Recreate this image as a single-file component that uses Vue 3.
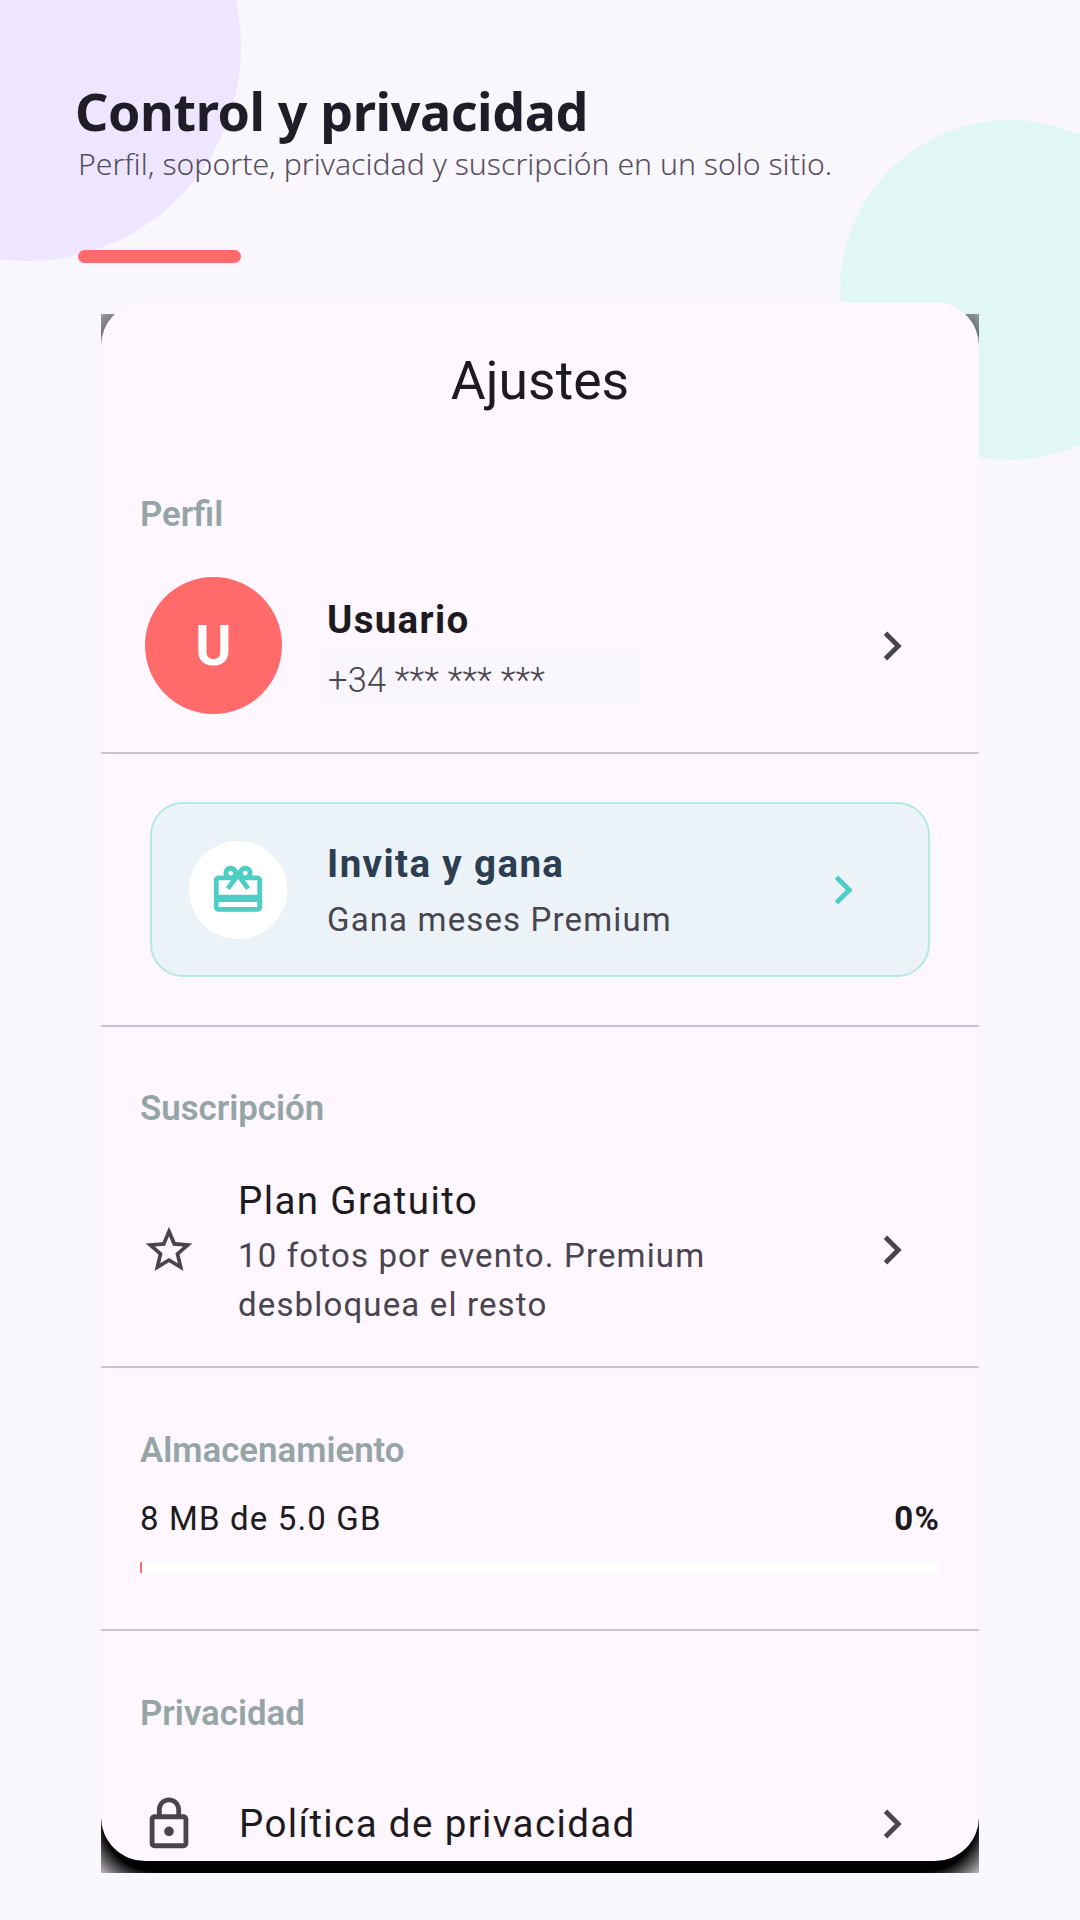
<template>
  <div class="page">
    <div class="blob blob-lilac"></div>
    <div class="blob blob-teal"></div>

    <header class="head">
      <h1 class="head-title">Control y privacidad</h1>
      <p class="head-sub">Perfil, soporte, privacidad y suscripción en un solo sitio.</p>
      <div class="head-bar"></div>
    </header>

    <div class="card-wrap">
      <div class="card-shadow"></div>
      <main class="card">
        <div class="app-title">Ajustes</div>

        <section class="sec sec-profile">
          <div class="label">Perfil</div>
          <div class="profile-row">
            <div class="avatar">U</div>
            <div class="profile-text">
              <div class="name">Usuario</div>
              <div class="phone">+34 *** *** ***</div>
            </div>
            <svg class="chev" viewBox="0 0 24 24"><path :d="icons.chevron" /></svg>
          </div>
        </section>

        <section class="sec sec-invite">
          <div class="invite">
            <div class="invite-icon">
              <svg viewBox="0 0 24 24"><path :d="icons.gift" /></svg>
            </div>
            <div class="invite-text">
              <div class="invite-title">Invita y gana</div>
              <div class="invite-sub">Gana meses Premium</div>
            </div>
            <svg class="chev chev-teal" viewBox="0 0 24 24"><path :d="icons.chevron" /></svg>
          </div>
        </section>

        <section class="sec sec-plan">
          <div class="label">Suscripción</div>
          <div class="plan-row">
            <svg class="lead lead-star" viewBox="0 0 24 24"><path :d="icons.star" /></svg>
            <div class="plan-text">
              <div class="item-title">Plan Gratuito</div>
              <div class="item-sub">10 fotos por evento. Premium<br />desbloquea el resto</div>
            </div>
            <svg class="chev" viewBox="0 0 24 24"><path :d="icons.chevron" /></svg>
          </div>
        </section>

        <section class="sec sec-storage">
          <div class="label">Almacenamiento</div>
          <div class="storage-line">
            <span>{{ storage.used }} de {{ storage.total }}</span>
            <strong>{{ storage.percent }}%</strong>
          </div>
          <div class="track"><div class="fill" :style="{ width: fillWidth }"></div></div>
        </section>

        <section class="sec-privacy">
          <div class="label">Privacidad</div>
          <div class="privacy-row">
            <svg class="lead lead-lock" viewBox="0 0 24 24"><path :d="icons.lock" /></svg>
            <div class="item-title">Política de privacidad</div>
            <svg class="chev" viewBox="0 0 24 24"><path :d="icons.chevron" /></svg>
          </div>
        </section>
      </main>
    </div>
  </div>
</template>

<script setup>
import { computed } from 'vue';

const storage = { used: '8 MB', total: '5.0 GB', percent: 0 };

// la barra siempre enseña un trocito aunque sea 0%
const fillWidth = computed(() => (storage.percent > 0 ? `${storage.percent}%` : '2px'));

const icons = {
  chevron: 'M10 6L8.59 7.41 13.17 12l-4.58 4.59L10 18l6-6z',
  gift: 'M20 6h-2.18c.11-.31.18-.65.18-1 0-1.66-1.34-3-3-3-1.05 0-1.96.54-2.5 1.35l-.5.67-.5-.68C10.96 2.54 10.05 2 9 2 7.34 2 6 3.34 6 5c0 .35.07.69.18 1H4c-1.11 0-1.99.89-1.99 2L2 19c0 1.11.89 2 2 2h16c1.11 0 2-.89 2-2V8c0-1.11-.89-2-2-2zm-5-2c.55 0 1 .45 1 1s-.45 1-1 1-1-.45-1-1 .45-1 1-1zM9 4c.55 0 1 .45 1 1s-.45 1-1 1-1-.45-1-1 .45-1 1-1zm11 15H4v-2h16v2zm0-5H4V8h5.08L7 10.83 8.62 12 11 8.76l1-1.36 1 1.36L15.38 12 17 10.83 14.92 8H20v6z',
  star: 'M22 9.24l-7.19-.62L12 2 9.19 8.63 2 9.24l5.46 4.73L5.82 21 12 17.27 18.18 21l-1.63-7.03L22 9.24zM12 15.4l-3.76 2.27 1-4.28-3.32-2.88 4.38-.38L12 6.1l1.71 4.04 4.38.38-3.32 2.88 1 4.28L12 15.4z',
  lock: 'M18 8h-1V6c0-2.76-2.24-5-5-5S7 3.24 7 6v2H6c-1.1 0-2 .9-2 2v10c0 1.1.9 2 2 2h12c1.1 0 2-.9 2-2V10c0-1.1-.9-2-2-2zM9 6c0-1.66 1.34-3 3-3s3 1.34 3 3v2H9V6zm9 14H6V10h12v10zm-6-3c1.1 0 2-.9 2-2s-.9-2-2-2-2 .9-2 2 .9 2 2 2z',
};
</script>

<style>
html,
body {
  margin: 0;
  background: #f9f6fc;
}
</style>

<style scoped>
.page {
  position: relative;
  width: 1080px;
  height: 1920px;
  overflow: hidden;
  background: #f9f6fc;
  font-family: Roboto, sans-serif;
}

.blob {
  position: absolute;
  border-radius: 50%;
}

.blob-lilac {
  left: -187px;
  top: -167px;
  width: 428px;
  height: 428px;
  background: #eee6ff;
}

.blob-teal {
  left: 840px;
  top: 120px;
  width: 340px;
  height: 340px;
  background: #e0f7f4;
}

.head {
  position: relative;
  height: 302px;
  padding: 75px 0 0 75px;
  box-sizing: border-box;
  font-family: "Noto Sans", sans-serif;
}

.head-title {
  margin: 0;
  font-size: 52px;
  line-height: 72px;
  font-weight: 700;
  letter-spacing: -0.4px;
  color: #211d28;
}

.head-sub {
  margin: -2px 0 0 3px;
  font-size: 30.2px;
  line-height: 38px;
  font-weight: 300;
  color: #544f60;
}

.head-bar {
  width: 163px;
  height: 13px;
  margin: 67px 0 0 3px;
  border-radius: 7px;
  background: #ff6b6b;
}

.card-wrap {
  position: relative;
  width: 878px;
  height: 1559px;
  margin-left: 101px;
}

/* sombra recortada que asoma por las esquinas */
.card-shadow {
  position: absolute;
  left: 0;
  right: 0;
  top: 12px;
  bottom: -12px;
  background:
    radial-gradient(circle at 100% 100%, rgba(0, 0, 0, 0.6) 44px, rgba(0, 0, 0, 0.36) 62px) left top / 44px 44px no-repeat,
    radial-gradient(circle at 0 100%, rgba(0, 0, 0, 0.6) 44px, rgba(0, 0, 0, 0.36) 62px) right top / 44px 44px no-repeat,
    radial-gradient(circle at 100% 0, #000 52px, rgba(0, 0, 0, 0.25) 76px) left bottom / 54px 54px no-repeat,
    radial-gradient(circle at 0 0, #000 52px, rgba(0, 0, 0, 0.25) 76px) right bottom / 54px 54px no-repeat,
    linear-gradient(#000, #000) center bottom / calc(100% - 108px) 54px no-repeat;
}

.card {
  position: relative;
  height: 100%;
  overflow: hidden;
  border-radius: 44px;
  background: #fef7ff;
}

.app-title {
  height: 150px;
  padding-top: 46px;
  box-sizing: border-box;
  text-align: center;
  font-size: 53.5px;
  line-height: 66px;
  color: #1d1b20;
}

.label {
  padding-left: 39px;
  font-size: 34.8px;
  line-height: 40px;
  font-weight: 600;
  color: #95a5a6;
}

.sec {
  box-sizing: border-box;
  border-bottom: 2px solid #cac4d0;
}

.sec-profile {
  height: 302px;
  padding-top: 42px;
}

.profile-row {
  display: flex;
  align-items: center;
  height: 137px;
  margin-top: 43px;
  padding-left: 44px;
}

.avatar {
  display: flex;
  flex: none;
  align-items: center;
  justify-content: center;
  width: 137px;
  height: 137px;
  border-radius: 50%;
  background: #ff6b6b;
  color: #fff;
  font-size: 55px;
  font-weight: 700;
}

.profile-text {
  flex: 1;
  margin-top: 9px;
  padding-left: 37px;
}

.name {
  padding-left: 8px;
  font-size: 38.5px;
  line-height: 46px;
  font-weight: 700;
  letter-spacing: 1.3px;
  color: #1d1b20;
}

.phone {
  width: 322px;
  height: 55px;
  margin-top: 6px;
  padding-left: 9px;
  box-sizing: border-box;
  border-radius: 12px;
  background: #f9f6fd;
  font-size: 34.4px;
  line-height: 62px;
  font-weight: 300;
  letter-spacing: 0.2px;
  color: #49454f;
}

.chev {
  flex: none;
  width: 58px;
  height: 58px;
  margin-right: 58px;
  fill: #49454f;
}

.chev-teal {
  margin-right: 56px;
  fill: #4ecdc4;
}

.sec-invite {
  height: 273px;
  padding: 48px 49px 0;
}

.invite {
  display: flex;
  align-items: center;
  height: 175px;
  padding-left: 37px;
  box-sizing: border-box;
  border: 2.5px solid #b5e8e5;
  border-radius: 33px;
  background: #ebf3f9;
}

.invite-icon {
  display: flex;
  flex: none;
  align-items: center;
  justify-content: center;
  width: 98px;
  height: 98px;
  border-radius: 50%;
  background: #fff;
}

.invite-icon svg {
  width: 58px;
  height: 58px;
  fill: #4ecdc4;
}

.invite-text {
  flex: 1;
  margin-top: 4px;
  padding-left: 40px;
}

.invite-title {
  font-size: 38.5px;
  line-height: 46px;
  font-weight: 700;
  letter-spacing: 1.375px;
  color: #2c3e50;
}

.invite-sub {
  margin-top: 10px;
  font-size: 33px;
  line-height: 46px;
  letter-spacing: 1.15px;
  color: #49454f;
}

.sec-plan {
  height: 341px;
  padding-top: 61px;
}

.plan-row {
  display: flex;
  align-items: center;
  margin-top: 42px;
  padding-left: 40px;
}

.lead {
  flex: none;
  fill: #49454f;
}

.lead-star {
  width: 56px;
  height: 56px;
}

.plan-text {
  flex: 1;
  margin-top: 7px;
  padding-left: 41px;
}

.item-title {
  font-size: 38.5px;
  line-height: 48px;
  letter-spacing: 1.375px;
  color: #1d1b20;
}

.item-sub {
  margin-top: 6px;
  font-size: 33px;
  line-height: 49px;
  letter-spacing: 1.15px;
  color: #49454f;
}

.sec-storage {
  height: 263px;
  padding-top: 62px;
}

.storage-line {
  display: flex;
  justify-content: space-between;
  margin-top: 25px;
  padding: 0 39px;
  font-size: 33px;
  line-height: 48px;
  letter-spacing: 1.15px;
  color: #1d1b20;
}

.track {
  height: 11px;
  margin: 19px 39px 0 39px;
  background: #fff;
}

.fill {
  height: 100%;
  background: #ff6b6b;
}

.sec-privacy {
  padding-top: 62px;
}

.privacy-row {
  display: flex;
  align-items: center;
  margin-top: 62px;
  padding-left: 39px;
}

.lead-lock {
  width: 58px;
  height: 58px;
}

.privacy-row .item-title {
  flex: 1;
  padding-left: 41px;
}
</style>
